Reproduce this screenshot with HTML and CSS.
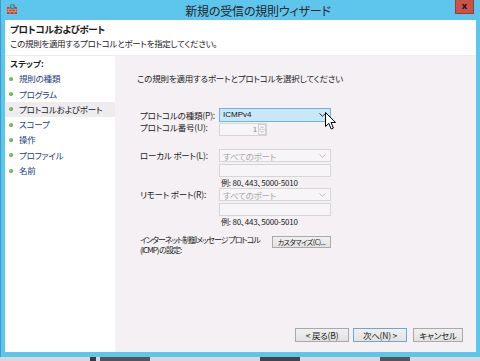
FILE: index.html
```html
<!DOCTYPE html>
<html lang="ja">
<head>
<meta charset="utf-8">
<title>新規の受信の規則ウィザード</title>
<link rel="stylesheet" href="styles.css">
</head>
<body>
<div class="window">
  <div class="titlebar">
    <svg class="appicon" width="10" height="10" viewBox="0 0 10 10">
      <rect x="0" y="3" width="10" height="7" fill="#b5432e"/>
      <path d="M0 5.3h10M0 7.6h10M3 3v2.3M7 3v2.3M1.5 5.3v2.3M5 5.3v2.3M8.5 5.3v2.3M3 7.6v2.4M7 7.6v2.4" stroke="#e9b09a" stroke-width="0.7"/>
      <circle cx="5.5" cy="2.6" r="2.4" fill="#3aa0c8" stroke="#1d6b8e" stroke-width="0.5"/>
      <path d="M4.2 1.6l1.6 0.6-0.6 1.4" stroke="#8fd46a" stroke-width="0.9" fill="none"/>
    </svg>
    <div class="title">新規の受信の規則ウィザード</div>
    <div class="close">x</div>
  </div>
  <div class="client">
    <div class="header">
      <div class="h-title">プロトコルおよびポート</div>
      <div class="h-sub">この規則を適用するプロトコルとポートを指定してください。</div>
    </div>
    <div class="content">
      <div class="steps">
        <div class="steps-head">ステップ:</div>
        <ul class="step-list">
          <li class="step">規則の種類</li>
          <li class="step">プログラム</li>
          <li class="step current">プロトコルおよびポート</li>
          <li class="step">スコープ</li>
          <li class="step">操作</li>
          <li class="step">プロファイル</li>
          <li class="step">名前</li>
        </ul>
      </div>
      <div class="main">
        <div class="intro">この規則を適用するポートとプロトコルを選択してください</div>
        <div class="form">
          <div class="row row-type">
            <div class="label">プロトコルの種類(P):</div>
            <div class="select active">
              <span>ICMPv4</span>
              <svg class="chev" width="7" height="4" viewBox="0 0 7 4"><path d="M0.5 0.5L3.5 3.3L6.5 0.5" stroke="#333" stroke-width="1" fill="none"/></svg>
            </div>
          </div>
          <div class="row row-num">
            <div class="label">プロトコル番号(U):</div>
            <div class="spinner">
              <span class="spin-val">1</span>
              <div class="spin-btns">
                <svg width="7" height="11" viewBox="0 0 7 11"><path d="M1.5 4l2-2 2 2" stroke="#b0b0b0" fill="none"/><path d="M0 5.5h7" stroke="#d0d0d0"/><path d="M1.5 7l2 2 2-2" stroke="#b0b0b0" fill="none"/></svg>
              </div>
            </div>
          </div>
          <div class="row row-port">
            <div class="label">ローカル ポート(L):</div>
            <div class="stack">
              <div class="select disabled">
                <span>すべてのポート</span>
                <svg class="chev" width="7" height="4" viewBox="0 0 7 4"><path d="M0.5 0.5L3.5 3.3L6.5 0.5" stroke="#bdbdbd" stroke-width="1" fill="none"/></svg>
              </div>
              <div class="textbox"></div>
              <div class="example">例: 80、443、5000-5010</div>
            </div>
          </div>
          <div class="row row-port2">
            <div class="label">リモート ポート(R):</div>
            <div class="stack">
              <div class="select disabled">
                <span>すべてのポート</span>
                <svg class="chev" width="7" height="4" viewBox="0 0 7 4"><path d="M0.5 0.5L3.5 3.3L6.5 0.5" stroke="#bdbdbd" stroke-width="1" fill="none"/></svg>
              </div>
              <div class="textbox tb2"></div>
              <div class="example">例: 80、443、5000-5010</div>
            </div>
          </div>
          <div class="row row-icmp">
            <div class="label icmp-label">インターネット制御メッセージ プロトコル<br>(ICMP) の設定:</div>
            <button class="btn customize">カスタマイズ(C)...</button>
          </div>
        </div>
        <div class="buttons">
          <button class="btn nav">&lt; 戻る(B)</button>
          <button class="btn nav default">次へ(N) &gt;</button>
          <button class="btn nav cancel">キャンセル</button>
        </div>
        <svg class="cursor" width="12" height="18" viewBox="0 0 12 18"><path d="M0.5 0.5V14.5L3.8 11.4L6.2 17L8.4 16L6 10.5H10.6Z" fill="#fff" stroke="#000" stroke-width="1" stroke-linejoin="miter"/></svg>
      </div>
    </div>
  </div>
</div>
<div class="desktop"></div>
</body>
</html>
```

FILE: styles.css
```css
html, body {
  margin: 0;
  padding: 0;
}
body {
  width: 480px;
  height: 361px;
  overflow: hidden;
  background: #dcdcdc;
  font-family: "Noto Sans CJK JP", "Noto Sans", sans-serif;
  font-feature-settings: "palt";
  color: #1a1a1a;
}
.window {
  height: 357px;
  background: #5ec5ed;
  border-left: 1px solid #3f9cc6;
  padding: 0 4px 0 4px;
  display: flex;
  flex-direction: column;
  box-sizing: border-box;
}
.titlebar {
  height: 20px;
  display: flex;
  align-items: flex-start;
  flex: none;
}
.appicon {
  margin: 4px 0 0 2px;
  flex: none;
}
.title {
  flex: 1;
  text-align: center;
  font-size: 12px;
  line-height: 22px;
  padding-left: 44px;
  color: #262626;
  letter-spacing: -0.2px;
}
.close {
  width: 19px;
  height: 14px;
  margin-right: 2px;
  background: #c7534b;
  border: 1px solid #9e3a34;
  border-top: none;
  box-sizing: border-box;
  text-align: center;
  font-family: "DejaVu Sans", sans-serif;
  font-weight: bold;
  font-size: 9px;
  line-height: 12px;
  color: #1a1a1a;
}
.client {
  flex: 1;
  display: flex;
  flex-direction: column;
  background: #fff;
  margin-bottom: 5px;
}
.header {
  height: 36px;
  padding: 3px 0 0 5px;
  box-sizing: border-box;
  border-bottom: 1px solid #ececec;
  flex: none;
}
.h-title {
  font-weight: bold;
  font-size: 9.5px;
  line-height: 12px;
  letter-spacing: -0.3px;
}
.h-sub {
  margin-top: 2px;
  font-size: 8.5px;
  line-height: 12px;
  letter-spacing: -0.3px;
}
.content {
  flex: 1;
  display: flex;
}
.steps {
  width: 110px;
  flex: none;
  background: #fff;
}
.steps-head {
  font-weight: bold;
  font-size: 8.5px;
  line-height: 15.3px;
  padding-left: 5px;
}
.step-list {
  list-style: none;
  margin: 0;
  padding: 0;
}
.step {
  position: relative;
  height: 15.3px;
  line-height: 15.3px;
  font-size: 8.5px;
  padding-left: 14px;
  color: #223e7e;
  letter-spacing: -0.2px;
}
.step::before {
  content: "";
  position: absolute;
  left: 4px;
  top: 5.5px;
  width: 4px;
  height: 4px;
  border-radius: 50%;
  background: radial-gradient(circle at 35% 35%, #8ad06a, #3f8f2c);
}
.step.current {
  background: #efecef;
  color: #1a1a1a;
}
.main {
  flex: 1;
  position: relative;
  background: #f4f0f4;
  padding: 16px 13px 10px 25px;
  display: flex;
  flex-direction: column;
  font-size: 8.5px;
  letter-spacing: -0.2px;
}
.intro {
  line-height: 12px;
  margin-left: -3px;
}
.form {
  margin-top: 24px;
}
.row {
  display: grid;
  grid-template-columns: 79px 112px;
}
.label {
  line-height: 11px;
  white-space: nowrap;
}
.row-type .label {
  align-self: center;
}
.select {
  height: 14px;
  box-sizing: border-box;
  border: 1px solid #d6d6d6;
  display: flex;
  align-items: center;
  justify-content: space-between;
  padding: 0 4px 0 3px;
  line-height: 12px;
}
.select.active {
  background: #c8e8f8;
  border-color: #6ab3e4;
  color: #111;
  font-family: "Liberation Sans", sans-serif;
  font-size: 8px;
  letter-spacing: 0;
}
.select.disabled {
  height: 13px;
  background: #f7f5f7;
  color: #a6a6a6;
}
.row-num {
  margin-top: 1px;
}
.row-num .label {
  margin-top: -1px;
}
.spinner {
  width: 48px;
  height: 13px;
  box-sizing: border-box;
  border: 1px solid #d6d6d6;
  background: #f7f5f7;
  display: flex;
  justify-content: flex-end;
  align-items: center;
}
.spin-val {
  color: #8a8a8a;
  font-family: "Liberation Sans", sans-serif;
  font-size: 8px;
  padding-right: 1px;
}
.spin-btns {
  width: 8px;
  height: 11px;
  border: 1px solid #d0d0d0;
  box-sizing: border-box;
  display: flex;
  align-items: center;
  justify-content: center;
  overflow: hidden;
}
.row-port {
  margin-top: 13px;
}
.row-port .label,
.row-port2 .label {
  margin-top: 1px;
}
.stack {
  display: flex;
  flex-direction: column;
}
.textbox {
  margin-top: 2px;
  height: 13px;
  box-sizing: border-box;
  border: 1px solid #d6d6d6;
  background: #f7f5f7;
}
.example {
  line-height: 11px;
  padding-left: 2px;
  color: #1a1a1a;
  font-size: 8px;
}
.row-icmp {
  margin-top: 8px;
  grid-template-columns: 132px auto;
}
.icmp-label {
  line-height: 10px;
  font-size: 8px;
  letter-spacing: -1px;
}
.btn {
  font-family: "Noto Sans CJK JP", "Noto Sans", sans-serif;
  font-feature-settings: "palt";
  font-size: 8.5px;
  letter-spacing: -0.2px;
  color: #1a1a1a;
  background: linear-gradient(#f0f0f0, #e2e2e2);
  border: 1px solid #a9a9a9;
  border-radius: 0;
  padding: 0;
  margin: 0;
  box-sizing: border-box;
  white-space: nowrap;
}
.customize {
  width: 59px;
  height: 12px;
  line-height: 10px;
  margin-top: 1px;
  font-size: 7px;
  letter-spacing: -0.4px;
  text-align: center;
}
.buttons {
  margin-top: auto;
  display: flex;
  justify-content: flex-end;
  gap: 4px;
}
.nav {
  width: 54px;
  height: 14px;
  line-height: 12px;
}
.nav.default {
  border-color: #6aa8d6;
}
.nav.cancel {
  margin-left: 2px;
  width: 50px;
}
.cursor {
  position: absolute;
  left: 210px;
  top: 56px;
}
.desktop {
  height: 4px;
  background: linear-gradient(90deg, #d9d9d9 0 90px, #3a3a3a 90px 96px, #d9d9d9 96px 100px, #555 100px 150px, #d9d9d9 150px 260px, #444 260px 300px, #d9d9d9 300px 380px, #555 380px 410px, #d9d9d9 410px);
}
```
